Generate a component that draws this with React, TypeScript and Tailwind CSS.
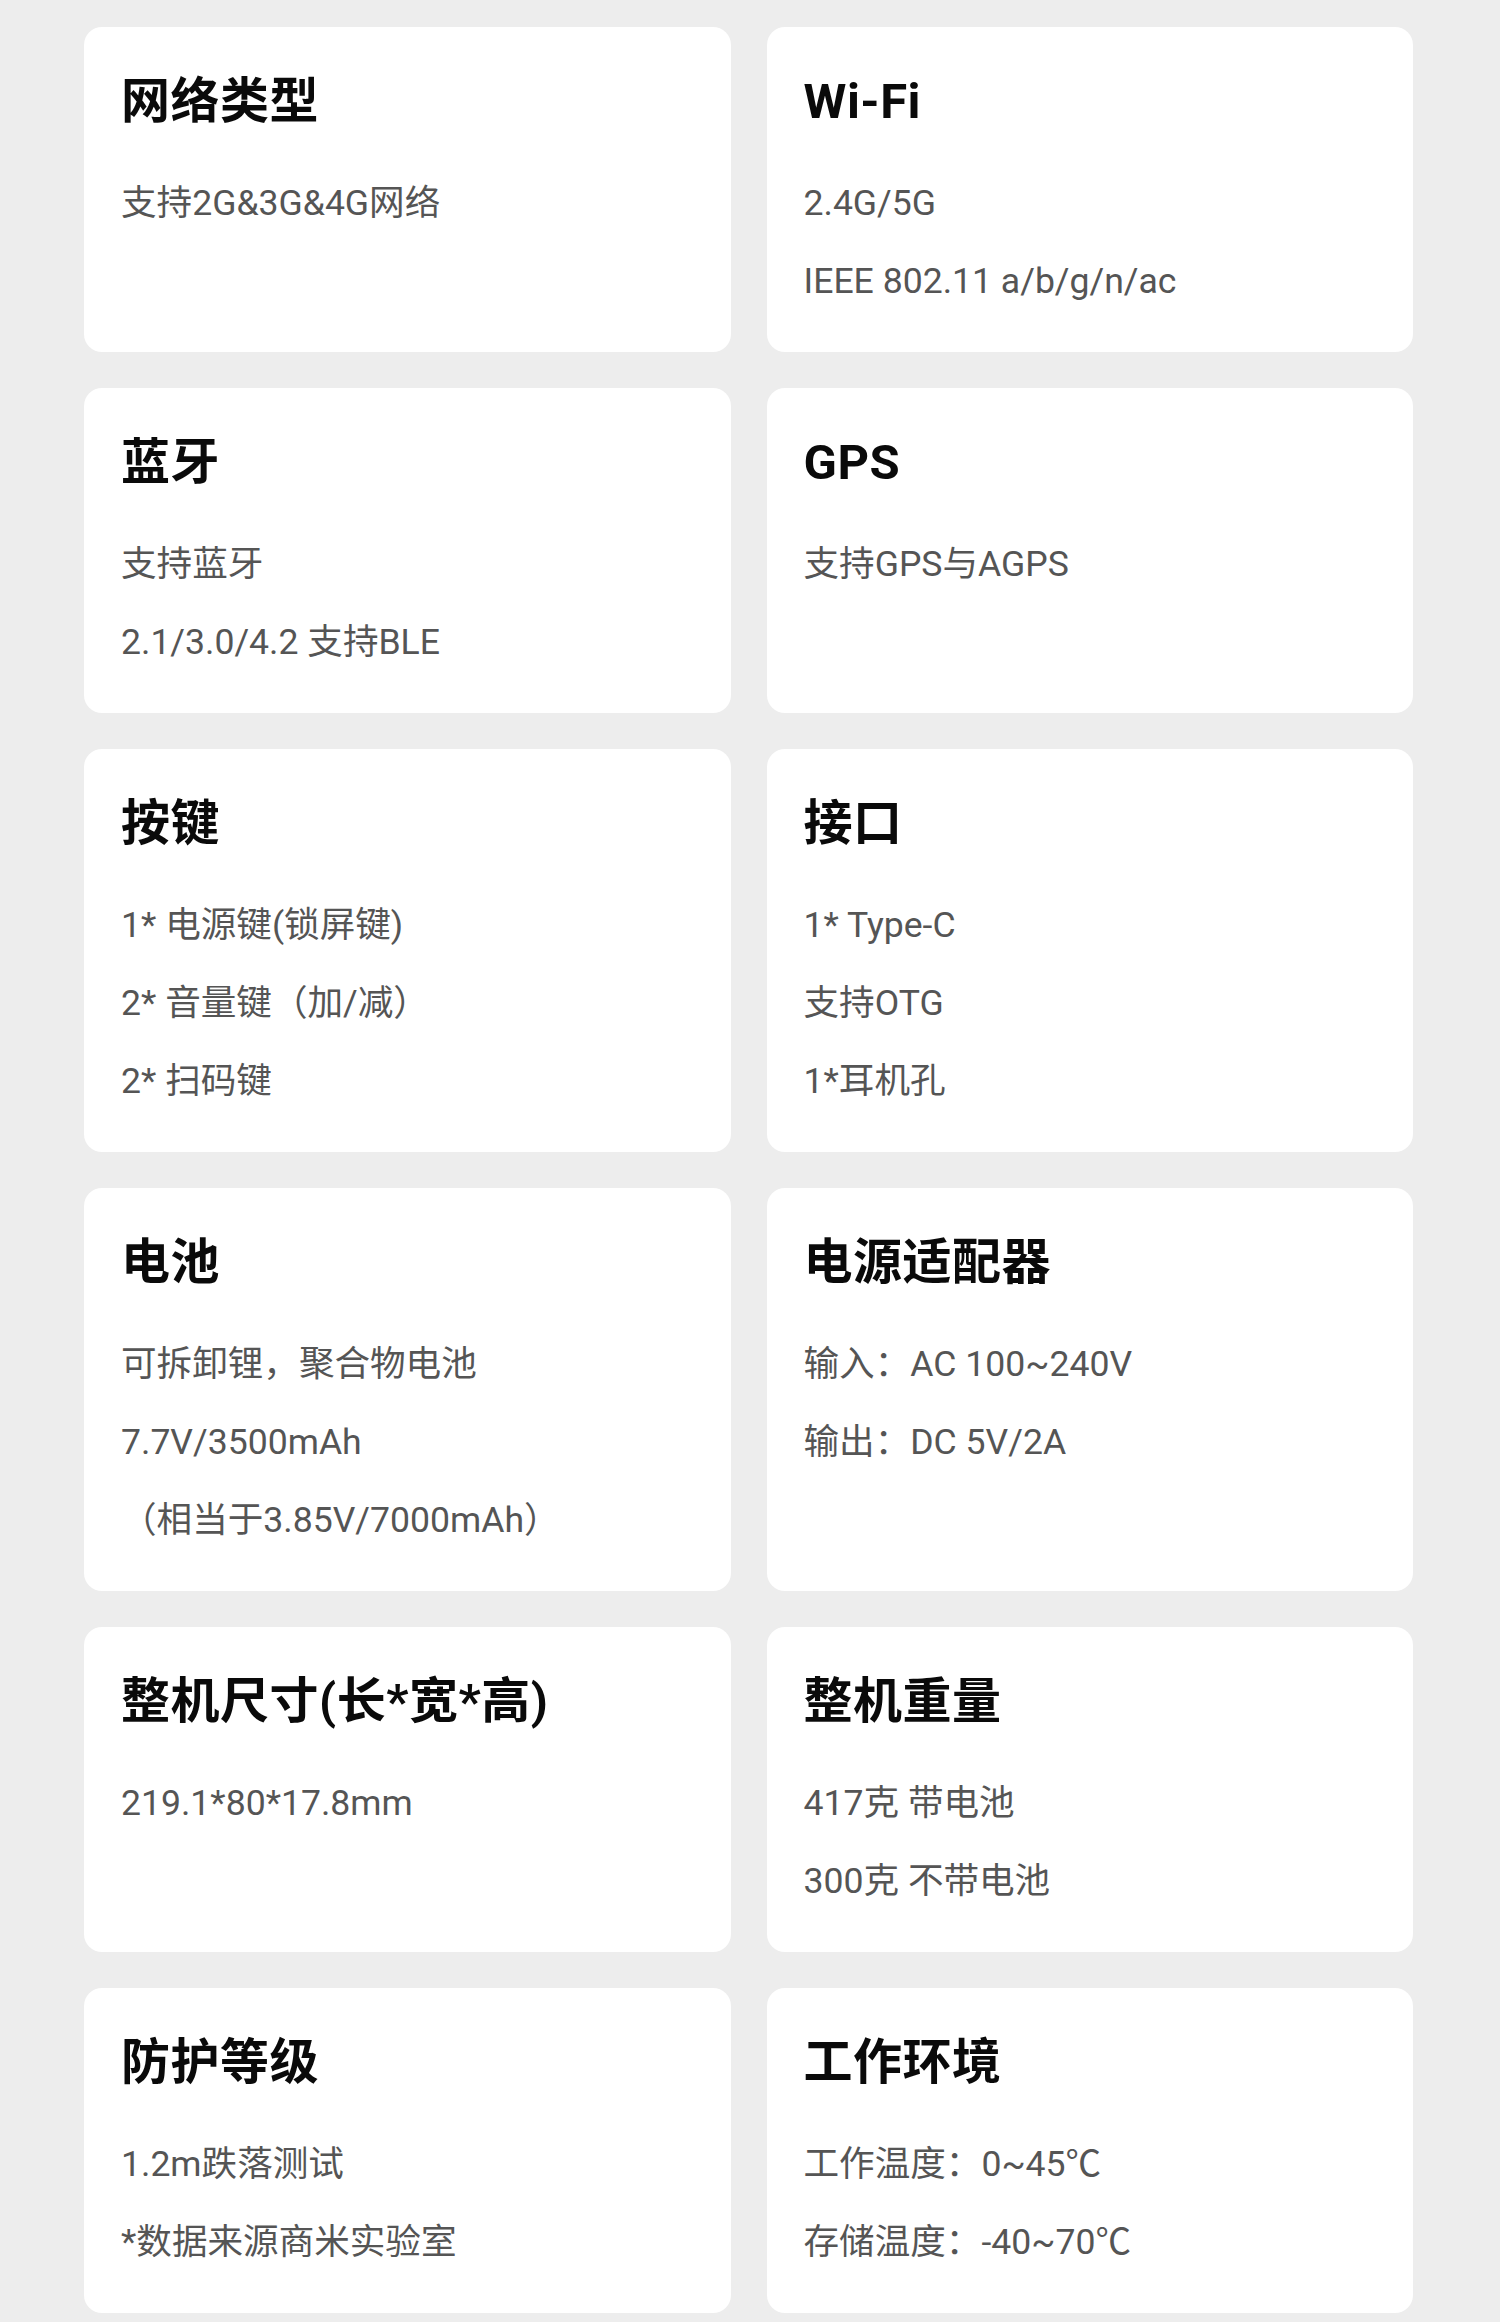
import React from "react";

type Spec = { title: string; lines: string[] };

const specs: Spec[] = [
  { title: "网络类型", lines: ["支持2G&3G&4G网络"] },
  { title: "Wi-Fi", lines: ["2.4G/5G", "IEEE 802.11 a/b/g/n/ac"] },
  { title: "蓝牙", lines: ["支持蓝牙", "2.1/3.0/4.2 支持BLE"] },
  { title: "GPS", lines: ["支持GPS与AGPS"] },
  { title: "按键", lines: ["1* 电源键(锁屏键)", "2* 音量键（加/减）", "2* 扫码键"] },
  { title: "接口", lines: ["1* Type-C", "支持OTG", "1*耳机孔"] },
  { title: "电池", lines: ["可拆卸锂，聚合物电池", "7.7V/3500mAh", "（相当于3.85V/7000mAh）"] },
  { title: "电源适配器", lines: ["输入：AC 100~240V", "输出：DC 5V/2A"] },
  { title: "整机尺寸(长*宽*高)", lines: ["219.1*80*17.8mm"] },
  { title: "整机重量", lines: ["417克 带电池", "300克 不带电池"] },
  { title: "防护等级", lines: ["1.2m跌落测试", "*数据来源商米实验室"] },
  { title: "工作环境", lines: ["工作温度：0~45℃", "存储温度：-40~70℃"] },
];

function Card({ spec }: { spec: Spec }) {
  return (
    <div className="bg-white rounded-[18px] pl-[37px] pr-6 pt-[51px] pb-[32px]">
      <div
        className="text-[49px] leading-[48px] font-bold text-[#0a0a0a] tracking-[0.5px]"
        style={{ fontFamily: 'Roboto, "Noto Sans CJK SC", sans-serif' }}
      >
        {spec.title}
      </div>
      <div className="mt-[38px]">
        {spec.lines.map((l, i) => (
          <div
            key={i}
            className="text-[35.6px] leading-[78px] text-[#555555] whitespace-nowrap"
            style={{ fontFamily: 'Roboto, "Noto Sans CJK SC", sans-serif' }}
          >
            {l}
          </div>
        ))}
      </div>
    </div>
  );
}

export default function App() {
  return (
    <div className="w-[1500px] min-h-[2322px] bg-[#ededed] pt-[27px] pb-[9px] pl-[84px] pr-[87px]">
      <div className="grid grid-cols-2 gap-[36px]">
        {specs.map((s, i) => (
          <Card key={i} spec={s} />
        ))}
      </div>
    </div>
  );
}
